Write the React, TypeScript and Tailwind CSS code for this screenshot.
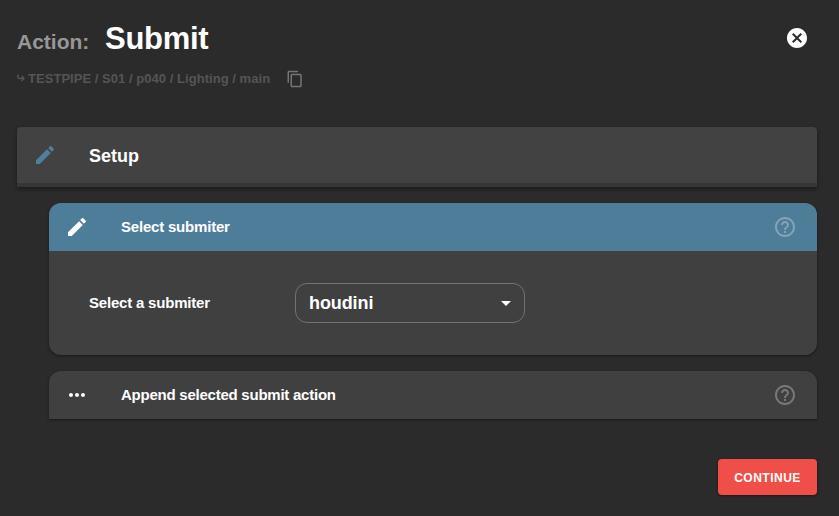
import React from 'react';
import {
  MdArrowDropDown,
  MdCancel,
  MdContentCopy,
  MdEdit,
  MdHelpOutline,
  MdMoreHoriz,
} from 'react-icons/md';

function PathArrow() {
  return (
    <svg width="8" height="10" viewBox="0 0 8 10" fill="none" stroke="currentColor" strokeWidth="1.4">
      <path d="M0.8 0.5v1.7q0 2.3 2.3 2.3H7M4.6 1.9l2.5 2.6L4.6 7.1" />
    </svg>
  );
}

function Header() {
  return (
    <header className="flex h-[127px] flex-col px-4">
      <div className="flex h-[62px] items-end justify-between pl-px">
        <h1 className="flex items-baseline">
          <span className="w-[88px] text-[21px] leading-10 text-[#979797]">Action:</span>
          <span className="text-[31px] leading-10 tracking-[-0.3px] text-white">Submit</span>
        </h1>
        <button className="mb-3 mr-3.5 text-white" aria-label="Close">
          <MdCancel size={24} />
        </button>
      </div>
      <div className="flex h-[33px] items-center pl-px text-[#555555]">
        <PathArrow />
        <span className="ml-[3px] w-[258px] whitespace-nowrap text-[13px] tracking-[0.04px]">
          TESTPIPE / S01 / p040 / Lighting / main
        </span>
        <MdContentCopy size={18} className="text-[#757575]" />
      </div>
    </header>
  );
}

function SectionHeader() {
  return (
    <section className="ml-[17px] mr-[22px] flex h-[60px] items-center rounded-t border-b-4 border-[#363636] bg-[#424242] pl-4 shadow-[0_2px_4px_rgba(0,0,0,0.4)]">
      <MdEdit size={24} className="text-[#4f7f9c]" />
      <h2 className="ml-8 pt-0.5 text-[18px] text-white">Setup</h2>
    </section>
  );
}

export default function App() {
  return (
    <main className="h-[516px] w-[839px] overflow-hidden bg-[#2b2b2b] font-['Liberation_Sans',Arial,sans-serif] font-bold">
      <Header />
      <SectionHeader />

      <div className="ml-[49px] mr-[22px] mt-4 flex flex-col gap-4 text-white">
        <section className="h-[152px] overflow-hidden rounded-xl bg-[#404040] shadow-[0_1px_3px_rgba(0,0,0,0.45)]">
          <div className="flex h-12 items-center bg-[#4e7d99] px-4 pr-5">
            <MdEdit size={24} />
            <h3 className="ml-8 flex-1 text-[15px] tracking-[-0.2px]">Select submiter</h3>
            <MdHelpOutline size={24} className="text-[#83a4b8]" />
          </div>
          <div className="flex h-[104px] items-center pl-10">
            <label className="w-[206px] text-[15px] tracking-[-0.2px]">Select a submiter</label>
            <button className="flex h-10 w-[230px] items-center justify-between rounded-xl border border-[#737373] pl-[13px] pr-1.5">
              <span className="pt-px text-[18px] tracking-[-0.1px]">houdini</span>
              <MdArrowDropDown size={24} />
            </button>
          </div>
        </section>

        <section className="flex h-12 items-center rounded-t-xl bg-[#404040] px-4 pr-5 shadow-[0_1px_3px_rgba(0,0,0,0.45)]">
          <MdMoreHoriz size={24} />
          <h3 className="ml-8 flex-1 text-[15px] tracking-[-0.24px]">Append selected submit action</h3>
          <MdHelpOutline size={24} className="text-[#797979]" />
        </section>
      </div>

      <footer className="mt-10 flex justify-end pr-[22px]">
        <button className="h-9 w-[99px] rounded bg-[#ef4f48] pt-px text-[12px] tracking-[0.5px] text-white shadow-[0_1px_3px_rgba(0,0,0,0.45)]">
          CONTINUE
        </button>
      </footer>
    </main>
  );
}
